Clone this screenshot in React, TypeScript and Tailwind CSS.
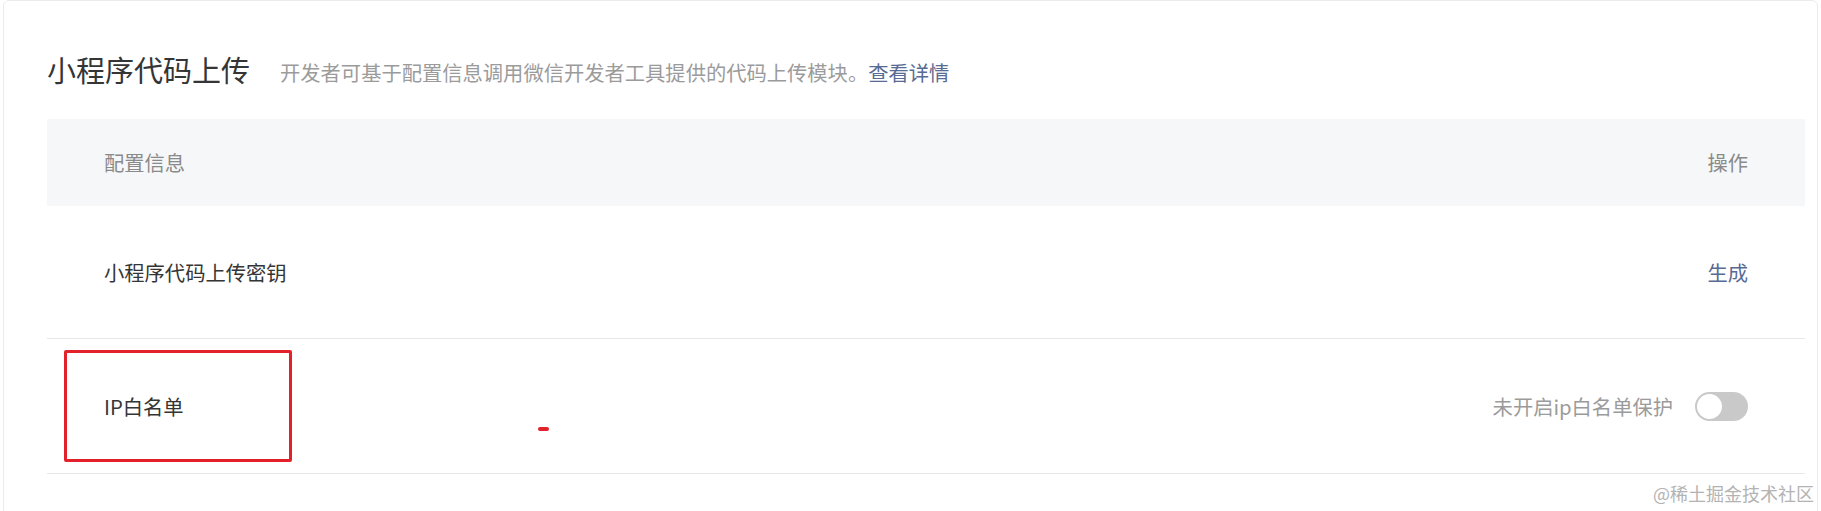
import React from "react";

export default function App() {
  const font = { fontFamily: '"Noto Sans CJK SC", "Noto Sans", sans-serif' };
  return (
    <div className="relative w-full h-[511px] overflow-hidden bg-white" style={font}>
      <div className="ml-[3px] mr-[3px] h-[530px] rounded-[6px] border border-[#ececec] bg-white pl-[43px] pr-[12px] pt-[54px]">
        <div className="flex items-center">
          <span className="text-[29px] leading-[29px] text-[#353535]">小程序代码上传</span>
          <span className="ml-[30px] pt-[5px] text-[20.3px] leading-[20px] text-[#9b9b9b]">
            开发者可基于配置信息调用微信开发者工具提供的代码上传模块。
            <span className="text-[#576b95]">查看详情</span>
          </span>
        </div>
        <div className="mt-[35px] flex h-[87px] items-center justify-between bg-[#f6f7f9] px-[57px] text-[20.3px] text-[#8a8a8a]">
          <span>配置信息</span>
          <span>操作</span>
        </div>
        <div className="flex h-[133px] items-center justify-between border-b border-[#e7e7e7] px-[57px] text-[20.3px]">
          <span className="text-[#353535]">小程序代码上传密钥</span>
          <span className="text-[#576b95]">生成</span>
        </div>
        <div className="relative flex h-[135px] items-center justify-between border-b border-[#e7e7e7] px-[57px] text-[20.3px]">
          <span className="text-[#353535]">IP白名单</span>
          <div className="flex items-center gap-[22px]">
            <span className="text-[#9b9b9b]">未开启ip白名单保护</span>
            <div className="flex h-[29px] w-[53px] items-center rounded-full bg-[#c9c9c9] p-[2px]">
              <div className="h-[25px] w-[25px] rounded-full bg-white" />
            </div>
          </div>
          <div className="absolute left-[17px] top-[11px] h-[112px] w-[228px] rounded-[2px] border-[3px] border-[#e3212b]" />
          <div className="absolute left-[491px] top-[88px] h-[4px] w-[11px] rounded-full bg-[#e3212b]" />
        </div>
      </div>
      <div className="absolute left-[1653px] top-[481px] text-[18px] leading-[24px] text-[#b3b3b3]">@稀土掘金技术社区</div>
    </div>
  );
}
